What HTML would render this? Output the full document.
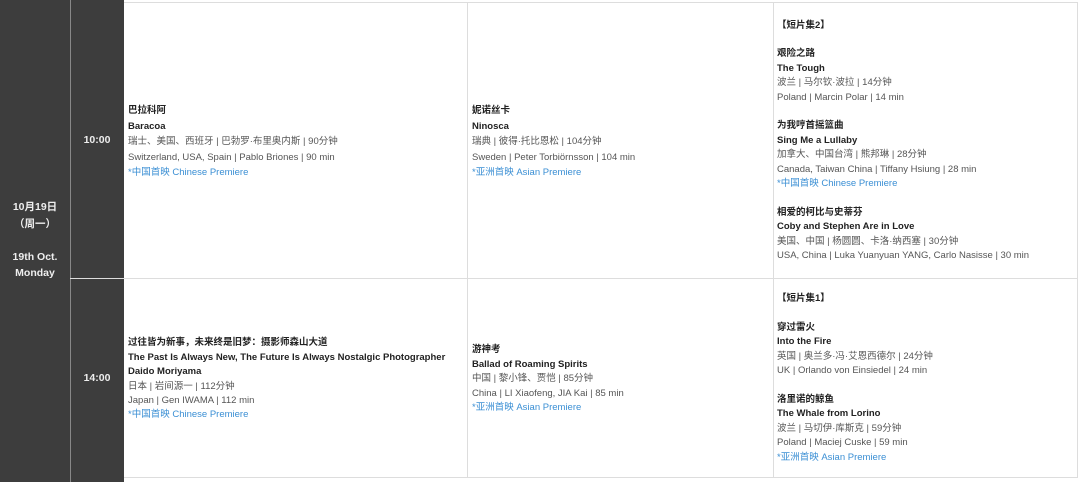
<!DOCTYPE html>
<html><head><meta charset="utf-8"><style>
*{margin:0;padding:0;box-sizing:border-box}
body{width:1080px;height:482px;background:#fff;font-family:"Liberation Sans","Noto Sans CJK SC",sans-serif;position:relative;overflow:hidden}
.d{position:absolute;background:#3d3d3d}
.ln{position:absolute;background:#ddd}
.c{position:absolute;display:flex;flex-direction:column;justify-content:center;font-size:9.5px;line-height:14.4px;color:#555;white-space:nowrap}
b{color:#222;font-weight:bold}
.bl{color:#3b8fd4}
.w{color:#eee;font-weight:bold;font-size:10.5px;text-align:center;position:absolute}
</style></head><body>
<div class="d" style="left:0;top:0;width:124px;height:482px"></div>
<div class="ln" style="left:70px;top:0;width:1px;height:482px;background:#888"></div>
<div class="ln" style="left:124px;top:2px;width:954px;height:1px"></div>
<div class="ln" style="left:70px;top:278px;width:1008px;height:1px"></div>
<div class="ln" style="left:124px;top:477px;width:954px;height:1px"></div>
<div class="ln" style="left:467px;top:2px;width:1px;height:476px"></div>
<div class="ln" style="left:773px;top:2px;width:1px;height:476px"></div>
<div class="ln" style="left:1077px;top:2px;width:1px;height:476px"></div>
<div class="w" style="left:0;width:70px;top:199px;line-height:16.5px">10月19日<br>（周一）<br><br>19th Oct.<br>Monday</div>
<div class="w" style="left:70px;width:54px;top:134px">10:00</div>
<div class="w" style="left:70px;width:54px;top:372px">14:00</div>

<div class="c" style="left:128px;top:4px;height:276px;line-height:15.4px"><b>巴拉科阿</b><b>Baracoa</b>瑞士、美国、西班牙 | 巴勃罗·布里奥内斯 | 90分钟<br>Switzerland, USA, Spain | Pablo Briones | 90 min<span class="bl">*中国首映 Chinese Premiere</span></div>
<div class="c" style="left:472px;top:4px;height:276px;line-height:15.4px"><b>妮诺丝卡</b><b>Ninosca</b>瑞典 | 彼得·托比恩松 | 104分钟<br>Sweden | Peter Torbiörnsson | 104 min<span class="bl">*亚洲首映 Asian Premiere</span></div>
<div class="c" style="left:777px;top:3px;height:276px"><b>【短片集2】</b><br><b>艰险之路</b><b>The Tough</b>波兰 | 马尔钦·波拉 | 14分钟<br>Poland | Marcin Polar | 14 min<br><br><b>为我哼首摇篮曲</b><b>Sing Me a Lullaby</b>加拿大、中国台湾 | 熊邦琳 | 28分钟<br>Canada, Taiwan China | Tiffany Hsiung | 28 min<span class="bl">*中国首映 Chinese Premiere</span><br><b>相爱的柯比与史蒂芬</b><b>Coby and Stephen Are in Love</b>美国、中国 | 杨圆圆、卡洛·纳西塞 | 30分钟<br>USA, China | Luka Yuanyuan YANG, Carlo Nasisse | 30 min</div>

<div class="c" style="left:128px;top:280px;height:199px"><b>过往皆为新事，未来终是旧梦：摄影师森山大道</b><b>The Past Is Always New, The Future Is Always Nostalgic Photographer</b><b>Daido Moriyama</b>日本 | 岩间源一 | 112分钟<br>Japan | Gen IWAMA | 112 min<span class="bl">*中国首映 Chinese Premiere</span></div>
<div class="c" style="left:472px;top:280px;height:199px"><b>游神考</b><b>Ballad of Roaming Spirits</b>中国 | 黎小锋、贾恺 | 85分钟<br>China | LI Xiaofeng, JIA Kai | 85 min<span class="bl">*亚洲首映 Asian Premiere</span></div>
<div class="c" style="left:777px;top:279px;height:199px"><b>【短片集1】</b><br><b>穿过雷火</b><b>Into the Fire</b>英国 | 奥兰多·冯·艾恩西德尔 | 24分钟<br>UK | Orlando von Einsiedel | 24 min<br><br><b>洛里诺的鲸鱼</b><b>The Whale from Lorino</b>波兰 | 马切伊·库斯克 | 59分钟<br>Poland | Maciej Cuske | 59 min<span class="bl">*亚洲首映 Asian Premiere</span></div>
</body></html>
